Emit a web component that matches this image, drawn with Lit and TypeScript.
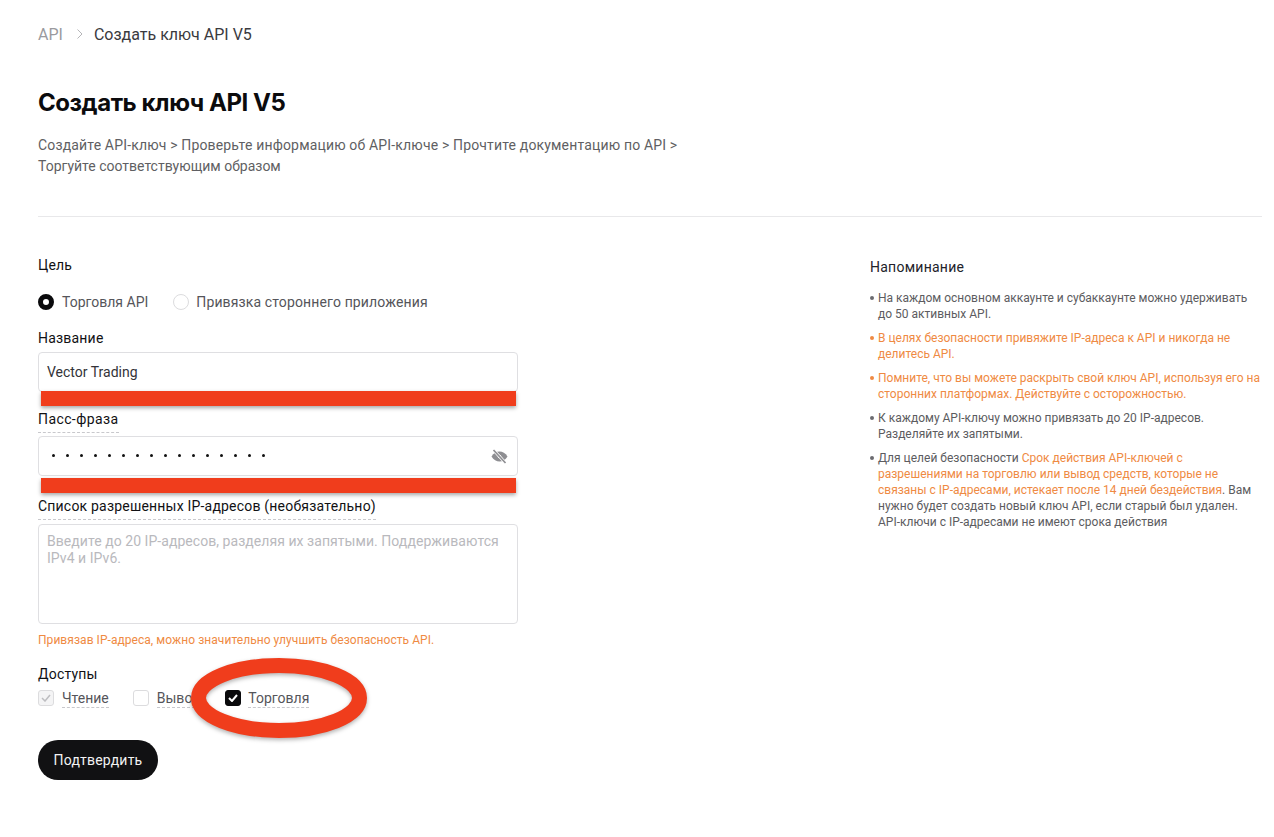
import { LitElement, html, css } from "lit";
import { customElement } from "lit/decorators.js";

@customElement("app-root")
export class AppRoot extends LitElement {
  static styles = css`
    :host {
      display: block;
      position: relative;
      width: 1274px;
      height: 837px;
      overflow: hidden;
      background: #fff;
      font-family: Roboto, "Noto Sans", "Liberation Sans", sans-serif;
      color: #121214;
      box-sizing: border-box;
    }
    * { box-sizing: border-box; }
    .page { padding: 24px 12px 0 38px; }
    .crumbs { display: flex; align-items: center; height: 20px; font-size: 16px; }
    .crumbs .root { color: #9a9a9e; }
    .crumbs svg { margin: 0 10px 0 13px; }
    .crumbs .cur { color: #3a3a3e; }
    h1 { margin: 44px 0 0; font-family: Inter, sans-serif; font-size: 24px; line-height: 30px; font-weight: 700; letter-spacing: -0.45px; color: #0b0b0d; }
    .intro { margin: 17px 0 0; width: 650px; font-size: 14px; line-height: 21px; color: #5f5f63; }
    .intro .l1 { letter-spacing: 0.16px; }
    .rule { height: 1px; background: #e8e8ea; margin-top: 39px; }
    .cols { display: flex; }
    .form { width: 480px; margin-top: 39px; flex: none; }
    .side { margin-left: 352px; margin-top: 41px; width: 392px; }
    .label { font-size: 14px; line-height: 18px; font-weight: 400; color: #111114; letter-spacing: 0.2px; }
    .dash { display: inline-block; border-bottom: 1px dashed #c8c8cc; padding-bottom: 4px; }
    .radios { display: flex; align-items: center; margin-top: 19px; height: 18px; font-size: 14px; color: #55555a; letter-spacing: 0.13px; }
    .radio { width: 16px; height: 16px; border-radius: 50%; border: 1px solid #dcdcde; margin-right: 8px; flex: none; }
    .radio.on { border: 5px solid #0a0a0c; }
    .radio.off { margin-right: 7px; }
    .radios span.t { margin-right: 24px; }
    .radios span.t.first { margin-right: 25px; letter-spacing: 0; }
    .name-label { margin-top: 18px; }
    .input {
      display: flex; align-items: center; justify-content: space-between;
      height: 40px; margin-top: 5px; border: 1px solid #dfdfe2; border-radius: 4px;
      padding: 0 8px; font-size: 14px; color: #333338; background: #fff;
    }
    .input.pass { margin-top: 3px; padding-right: 9px; }
    .pass-label { margin-top: 18px; letter-spacing: 0.4px; }
    .dots { display: flex; gap: 8px; padding-left: 5px; margin-top: -1px; }
    .dots i { width: 3px; height: 3px; border-radius: 50%; background: #111; display: block; margin-right: 3px; }
    .ip-label { margin-top: 21px; }
    .textarea {
      height: 100px; margin-top: 4px; border: 1px solid #dfdfe2; border-radius: 4px;
      padding: 8px; font-size: 14px; line-height: 17px; color: #b9b9bd; letter-spacing: 0.05px;
    }
    .hint { margin-top: 8px; font-size: 12px; line-height: 16px; color: #ef8a43; letter-spacing: 0.05px; }
    .access { margin-top: 17px; }
    .checks { display: flex; align-items: flex-start; margin-top: 6px; font-size: 14px; color: #55555a; height: 26px; }
    .checks .dash { padding-bottom: 0; }
    .check { width: 16px; height: 16px; border-radius: 3px; border: 1px solid #dcdcde; margin-right: 8px; margin-top: 1px; flex: none; display: flex; align-items: center; justify-content: center; }
    .check.ro { background: #f4f4f5; }
    .check.on { background: #0a0a0c; border-color: #0a0a0c; margin-right: 7px; }
    .check + .t { line-height: 18px; }
    .checks .t { margin-right: 24px; }
    .checks .t.wd { margin-right: 25px; }
    .btn { display: flex; align-items: center; justify-content: center; width: 120px; height: 40px; margin-top: 25px; border-radius: 20px; background: #111113; color: #f2f2f2; font-size: 14px; font-weight: 400; letter-spacing: 0.2px; }
    h2 { margin: 0; font-size: 14px; line-height: 18px; font-weight: 400; color: #22222a; letter-spacing: 0.25px; }
    ul { list-style: none; margin: 14px 0 0; padding: 0; font-size: 12px; line-height: 16px; color: #5c5c60; }
    li { position: relative; padding-left: 8px; margin-bottom: 8px; }
    li::before { content: ""; position: absolute; left: 0; top: 6px; width: 4px; height: 4px; border-radius: 50%; background: #6b6b70; }
    li.hot::before { background: #ef8a43; }
    .o { color: #ef8a43; }
    .bar { position: absolute; left: 41px; width: 475px; height: 15px; background: #f03d1c; box-shadow: 0 2px 4px rgba(0,0,0,.35); }
    .bar.a { top: 391px; }
    .bar.b { top: 478px; }
    .ring { position: absolute; left: 186px; top: 652px; filter: drop-shadow(0 2px 2px rgba(0,0,0,.3)); }
  `;

  render() {
    return html`
      <div class="page">
        <div class="crumbs">
          <span class="root">API</span>
          <svg width="8" height="12" viewBox="0 0 8 12" fill="none"><path d="M1.500 1.500 6 6l-4.500 4.500" stroke="#b5b5b8" stroke-width="1"/></svg>
          <span class="cur">Создать ключ API V5</span>
        </div>
        <h1>Создать ключ API V5</h1>
        <p class="intro"><span class="l1">Создайте API-ключ &gt; Проверьте информацию об API-ключе &gt; Прочтите документацию по API &gt;</span> Торгуйте соответствующим образом</p>
        <div class="rule"></div>
        <div class="cols">
          <div class="form">
            <div class="label">Цель</div>
            <div class="radios">
              <span class="radio on"></span><span class="t first">Торговля API</span>
              <span class="radio off"></span><span class="t">Привязка стороннего приложения</span>
            </div>
            <div class="label name-label">Название</div>
            <div class="input">Vector Trading</div>
            <div class="label pass-label"><span class="dash">Пасс-фраза</span></div>
            <div class="input pass">
              <div class="dots">${Array.from({ length: 16 }, () => html`<i></i>`)}</div>
              <svg width="17" height="15" viewBox="0 0 17 15" fill="none">
                <path d="M0.500 7.500C2.500 4 5.500 2.500 8.500 2.500s6 1.500 8 5C14.500 11 11.500 12.500 8.500 12.500s-6-1.500-8-5Z" fill="#8e8e92"/>
                <circle cx="8.500" cy="7.500" r="1.700" fill="#fff"/>
                <path d="M2.500 1 14.500 14" stroke="#fff" stroke-width="3"/>
                <path d="M2.500 1 14.500 14" stroke="#8e8e92" stroke-width="1.700"/>
              </svg>
            </div>
            <div class="label ip-label"><span class="dash">Список разрешенных IP-адресов (необязательно)</span></div>
            <div class="textarea">Введите до 20 IP-адресов, разделяя их запятыми. Поддерживаются IPv4 и IPv6.</div>
            <div class="hint">Привязав IP-адреса, можно значительно улучшить безопасность API.</div>
            <div class="label access">Доступы</div>
            <div class="checks">
              <span class="check ro"><svg width="10" height="8" viewBox="0 0 10 8" fill="none"><path d="M1 4l3 3 5-6" stroke="#bdbdc0" stroke-width="1.500"/></svg></span><span class="t dash">Чтение</span>
              <span class="check"></span><span class="t wd dash">Вывод</span>
              <span class="check on"><svg width="10" height="8" viewBox="0 0 10 8" fill="none"><path d="M1 4l3 3 5-6" stroke="#fff" stroke-width="2"/></svg></span><span class="t dash">Торговля</span>
            </div>
            <div class="btn">Подтвердить</div>
          </div>
          <div class="side">
            <h2>Напоминание</h2>
            <ul>
              <li>На каждом основном аккаунте и субаккаунте можно удерживать до 50 активных API.</li>
              <li class="hot o">В целях безопасности привяжите IP-адреса к API и никогда не делитесь API.</li>
              <li class="hot o">Помните, что вы можете раскрыть свой ключ API, используя его на сторонних платформах. Действуйте с осторожностью.</li>
              <li>К каждому API-ключу можно привязать до 20 IP-адресов. Разделяйте их запятыми.</li>
              <li>Для целей безопасности <span class="o">Срок действия API-ключей с разрешениями на торговлю или вывод средств, которые не связаны с IP-адресами, истекает после 14 дней бездействия</span>. Вам нужно будет создать новый ключ API, если старый был удален. API-ключи с IP-адресами не имеют срока действия</li>
            </ul>
          </div>
        </div>
      </div>
      <div class="bar a"></div>
      <div class="bar b"></div>
      <svg class="ring" width="187" height="92" viewBox="0 0 187 92" fill="none">
        <ellipse cx="93" cy="46" rx="80.500" ry="32.500" stroke="#f03d1c" stroke-width="15"/>
      </svg>
    `;
  }
}
